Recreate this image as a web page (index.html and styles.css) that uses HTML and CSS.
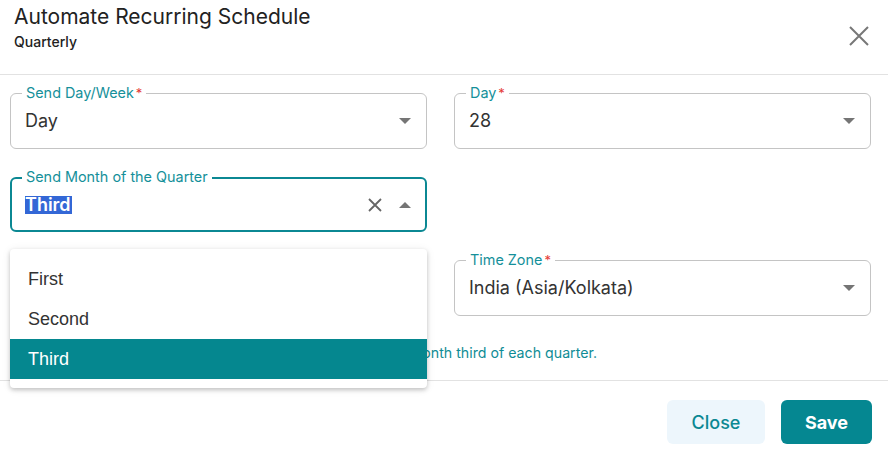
FILE: index.html
```html
<!DOCTYPE html>
<html>
<head>
<meta charset="utf-8">
<link rel="stylesheet" href="styles.css">
</head>
<body>
<div class="dialog">
  <header class="head">
    <div class="titles">
      <h1 class="title">Automate Recurring Schedule</h1>
      <p class="subtitle">Quarterly</p>
    </div>
    <button class="close-x" aria-label="Close">
      <svg width="20" height="20" viewBox="0 0 20 20"><path d="M1 1 L19 19 M19 1 L1 19" stroke="#777" stroke-width="2" fill="none"/></svg>
    </button>
  </header>

  <section class="body">
    <div class="grid">
      <div class="field">
        <span class="label">Send Day/Week<span class="req">*</span></span>
        <span class="value">Day</span>
        <span class="caret"></span>
      </div>
      <div class="field">
        <span class="label">Day<span class="req">*</span></span>
        <span class="value">28</span>
        <span class="caret"></span>
      </div>
      <div class="field focused">
        <span class="label">Send Month of the Quarter</span>
        <span class="value"><span class="sel">Third</span></span>
        <svg class="clear" width="14" height="14" viewBox="0 0 14 14"><path d="M1 1 L13 13 M13 1 L1 13" stroke="#666" stroke-width="1.8" fill="none"/></svg>
        <span class="caret up"></span>
      </div>
      <div class="empty"></div>
      <div class="empty"></div>
      <div class="field">
        <span class="label">Time Zone<span class="req">*</span></span>
        <span class="value">India (Asia/Kolkata)</span>
        <span class="caret"></span>
      </div>
    </div>
    <p class="helper">Your recurring report will be sent on day 28 of the month third of each quarter.</p>
  </section>

  <footer class="foot">
    <button class="btn btn-light">Close</button>
    <button class="btn btn-primary">Save</button>
  </footer>

  <ul class="menu">
    <li class="item">First</li>
    <li class="item">Second</li>
    <li class="item active">Third</li>
  </ul>
</div>
</body>
</html>
```

FILE: styles.css
```css
* { box-sizing: border-box; }
html, body { margin: 0; padding: 0; background: #fff; }
body { font-family: Inter, "Noto Sans", sans-serif; color: #222; }

.dialog { position: relative; width: 888px; height: 450px; }

.head {
  display: flex;
  justify-content: space-between;
  align-items: flex-start;
  height: 75px;
  padding: 4px 19px 0 14px;
  border-bottom: 1px solid #e2e2e2;
}
.title { margin: 0; font-size: 21px; line-height: 26px; font-weight: 400; color: #222; }
.subtitle { margin: 3px 0 0; font-size: 14px; line-height: 17px; font-weight: 500; color: #222; }
.close-x { border: 0; background: none; padding: 0; margin-top: 22px; width: 20px; height: 20px; cursor: pointer; }
.close-x svg { display: block; }

.body { padding: 18px 17px 0 10px; height: 306px; border-bottom: 1px solid #e2e2e2; }
.grid {
  display: grid;
  grid-template-columns: 417px 417px;
  column-gap: 27px;
  row-gap: 28px;
}
.field {
  position: relative;
  height: 56px;
  border: 1px solid #c4c4c4;
  border-radius: 6px;
  display: flex;
  align-items: center;
  padding: 0 15px 0 14px;
}
.field.focused { border: 2px solid #0b8893; height: 55px; padding-left: 13px; padding-right: 14px; }
.empty { height: 0; }
.label {
  position: absolute;
  top: -10px;
  left: 11px;
  padding: 0 4px;
  background: #fff;
  font-size: 14.4px;
  line-height: 17px;
  color: #15909a;
}
.focused .label { left: 10px; top: -11px; }
.req { color: #e53935; margin-left: 2px; font-size: 13px; }
.value { flex: 1; font-size: 18px; line-height: 20px; color: #333; }
.sel { background: #3367d6; color: #fff; font-weight: 600; padding: 0 1px 0 0; display: inline-block; line-height: 18px; }
.caret {
  width: 0; height: 0;
  border-left: 6px solid transparent;
  border-right: 6px solid transparent;
  border-top: 6px solid #757575;
}
.caret.up { border-top: 0; border-bottom: 6px solid #757575; }
.clear { margin-right: 17px; }

.helper {
  margin: 28px 0 0;
  padding-right: 274px;
  text-align: right;
  font-size: 14.2px;
  line-height: 17px;
  color: #0f8c96;
  white-space: nowrap;
}

.foot {
  display: flex;
  justify-content: flex-end;
  gap: 16px;
  padding: 19px 16px 0 0;
}
.btn {
  height: 44px;
  border: 0;
  border-radius: 6px;
  font-family: Inter, "Noto Sans", sans-serif;
  font-size: 18px;
  cursor: pointer;
}
.btn-light { width: 98px; background: #edf6fc; color: #0b8893; font-weight: 500; }
.btn-primary { width: 91px; background: #058791; color: #fff; font-weight: 700; }

.menu {
  position: absolute;
  left: 10px;
  top: 249px;
  width: 417px;
  margin: 0;
  padding: 10px 0 9px;
  list-style: none;
  background: #fff;
  border-radius: 4px;
  box-shadow: 0 2px 4px rgba(0,0,0,0.2), 0 1px 10px rgba(0,0,0,0.08);
}
.item {
  height: 40px;
  display: flex;
  align-items: center;
  padding-left: 18px;
  font-family: "Liberation Sans", Arial, sans-serif;
  font-size: 18px;
  color: #333;
}
.item.active { background: #05878f; color: #fff; }
```
